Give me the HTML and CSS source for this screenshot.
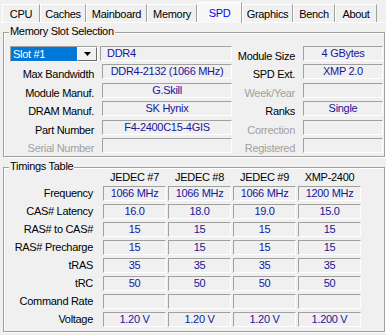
FILE: index.html
```html
<!DOCTYPE html>
<html>
<head>
    <title>CPU-Z SPD</title>
    <link rel="stylesheet" href="styles.css">
</head>
<body>
    <div class="tabs">
        <div class="tab tab-cpu">CPU</div>
        <div class="tab tab-caches">Caches</div>
        <div class="tab tab-mainboard">Mainboard</div>
        <div class="tab tab-memory">Memory</div>
        <div class="tab tab-spd active">SPD</div>
        <div class="tab tab-graphics">Graphics</div>
        <div class="tab tab-bench">Bench</div>
        <div class="tab tab-about">About</div>
    </div>

    <div class="group slot">
        <span class="group-title">Memory Slot Selection</span>
        <div class="slot-grid">
            <div class="slot-pick">
                <div class="combo">
                    <span class="combo-value">Slot #1</span>
                    <span class="combo-btn">
                        <svg width="7" height="4" viewBox="0 0 7 4"><polygon points="0,0 7,0 3.5,4" fill="#000"/></svg>
                    </span>
                </div>
                <div class="field field-left">DDR4</div>
            </div>
            <div class="label">Module Size</div>
            <div class="field">4 GBytes</div>

            <div class="label">Max Bandwidth</div>
            <div class="field">DDR4-2132 (1066 MHz)</div>
            <div class="label">SPD Ext.</div>
            <div class="field">XMP 2.0</div>

            <div class="label">Module Manuf.</div>
            <div class="field">G.Skill</div>
            <div class="label off">Week/Year</div>
            <div class="field"></div>

            <div class="label">DRAM Manuf.</div>
            <div class="field">SK Hynix</div>
            <div class="label">Ranks</div>
            <div class="field">Single</div>

            <div class="label">Part Number</div>
            <div class="field">F4-2400C15-4GIS</div>
            <div class="label off">Correction</div>
            <div class="field"></div>

            <div class="label off">Serial Number</div>
            <div class="field"></div>
            <div class="label off">Registered</div>
            <div class="field"></div>
        </div>
    </div>

    <div class="group timings">
        <span class="group-title">Timings Table</span>
        <div class="timing-grid">
            <div></div>
            <div class="col-head">JEDEC #7</div>
            <div class="col-head">JEDEC #8</div>
            <div class="col-head">JEDEC #9</div>
            <div class="col-head">XMP-2400</div>

            <div class="label">Frequency</div>
            <div class="field">1066 MHz</div>
            <div class="field">1066 MHz</div>
            <div class="field">1066 MHz</div>
            <div class="field">1200 MHz</div>

            <div class="label">CAS# Latency</div>
            <div class="field">16.0</div>
            <div class="field">18.0</div>
            <div class="field">19.0</div>
            <div class="field">15.0</div>

            <div class="label">RAS# to CAS#</div>
            <div class="field">15</div>
            <div class="field">15</div>
            <div class="field">15</div>
            <div class="field">15</div>

            <div class="label">RAS# Precharge</div>
            <div class="field">15</div>
            <div class="field">15</div>
            <div class="field">15</div>
            <div class="field">15</div>

            <div class="label">tRAS</div>
            <div class="field">35</div>
            <div class="field">35</div>
            <div class="field">35</div>
            <div class="field">35</div>

            <div class="label">tRC</div>
            <div class="field">50</div>
            <div class="field">50</div>
            <div class="field">50</div>
            <div class="field">50</div>

            <div class="label">Command Rate</div>
            <div class="field"></div>
            <div class="field"></div>
            <div class="field"></div>
            <div class="field"></div>

            <div class="label">Voltage</div>
            <div class="field">1.20 V</div>
            <div class="field">1.20 V</div>
            <div class="field">1.20 V</div>
            <div class="field">1.200 V</div>
        </div>
    </div>
</body>
</html>
```

FILE: styles.css
```css
body { margin: 0; width: 386px; height: 335px; overflow: hidden; background: #f0f0f0; color: #000; font-family: "Liberation Sans", Arial, sans-serif; font-size: 11px; letter-spacing: -0.3px; }

/* tab strip */
.tabs { display: flex; align-items: flex-end; height: 22px; padding-left: 2px; border-bottom: 1px solid #fff; }
.tab { box-sizing: border-box; height: 18px; padding-top: 1px; line-height: 16px; text-align: center; white-space: nowrap; border-top: 1px solid #fff; border-left: 1px solid #fff; border-right: 1px solid #a0a0a0; }
.tab.active { position: relative; height: 21px; margin-bottom: -1px; padding-top: 2px; color: #0000ff; background: #f7f7f7; }
.tab-cpu { width: 38px; }
.tab-caches { width: 46px; }
.tab-mainboard { width: 61px; }
.tab-memory { width: 50px; }
.tab-spd { width: 45px; }
.tab-graphics { width: 51px; }
.tab-bench { width: 42px; }
.tab-about { width: 42px; }

/* group boxes */
.group { position: relative; margin: 9px 1px 0 3px; border: 1px solid #a0a0a0; box-shadow: inset 1px 1px 0 #fff, 1px 1px 0 #fff; }
.group-title { position: absolute; top: -8px; left: 5px; padding: 0 1px; line-height: 13px; background: #f0f0f0; }
.slot { padding: 13px 0 3px; }
.timings { margin-top: 10px; padding: 3px 0 4px; }

.label { padding-right: 8px; line-height: 15px; text-align: right; white-space: nowrap; }
.label.off { color: #a0a0a0; }
.field { box-sizing: border-box; height: 15px; line-height: 13px; text-align: center; white-space: nowrap; overflow: hidden; color: #16169c; border: 1px solid; border-color: #a0a0a0 #fff #fff #a0a0a0; }
.field-left { flex: 1; padding-left: 6px; text-align: left; }

/* memory slot section */
.slot-grid { display: grid; grid-template-columns: 98px 130px 71px 80px; grid-template-rows: 18px 19px 18px 19px 18px 15px; }
.slot-grid .label { padding-top: 3px; }
.slot-pick { grid-column: span 2; display: flex; gap: 2px; padding-left: 6px; }
.combo { box-sizing: border-box; display: flex; width: 88px; height: 16px; border: 1px solid; border-color: #a0a0a0 #fff #fff #a0a0a0; }
.combo-value { flex: 1; padding-left: 2px; line-height: 14px; color: #fff; background: #0078d7; }
.combo-btn { box-sizing: border-box; display: flex; align-items: center; justify-content: center; width: 20px; border: 1px solid; border-color: #fff #696969 #696969 #fff; background: #f0f0f0; }

/* timings table */
.timing-grid { display: grid; grid-template-columns: 97px repeat(4, 63px); grid-template-rows: 12px; grid-auto-rows: 15px; gap: 3px 2px; }
.col-head { line-height: 12px; text-align: center; white-space: nowrap; }
```
